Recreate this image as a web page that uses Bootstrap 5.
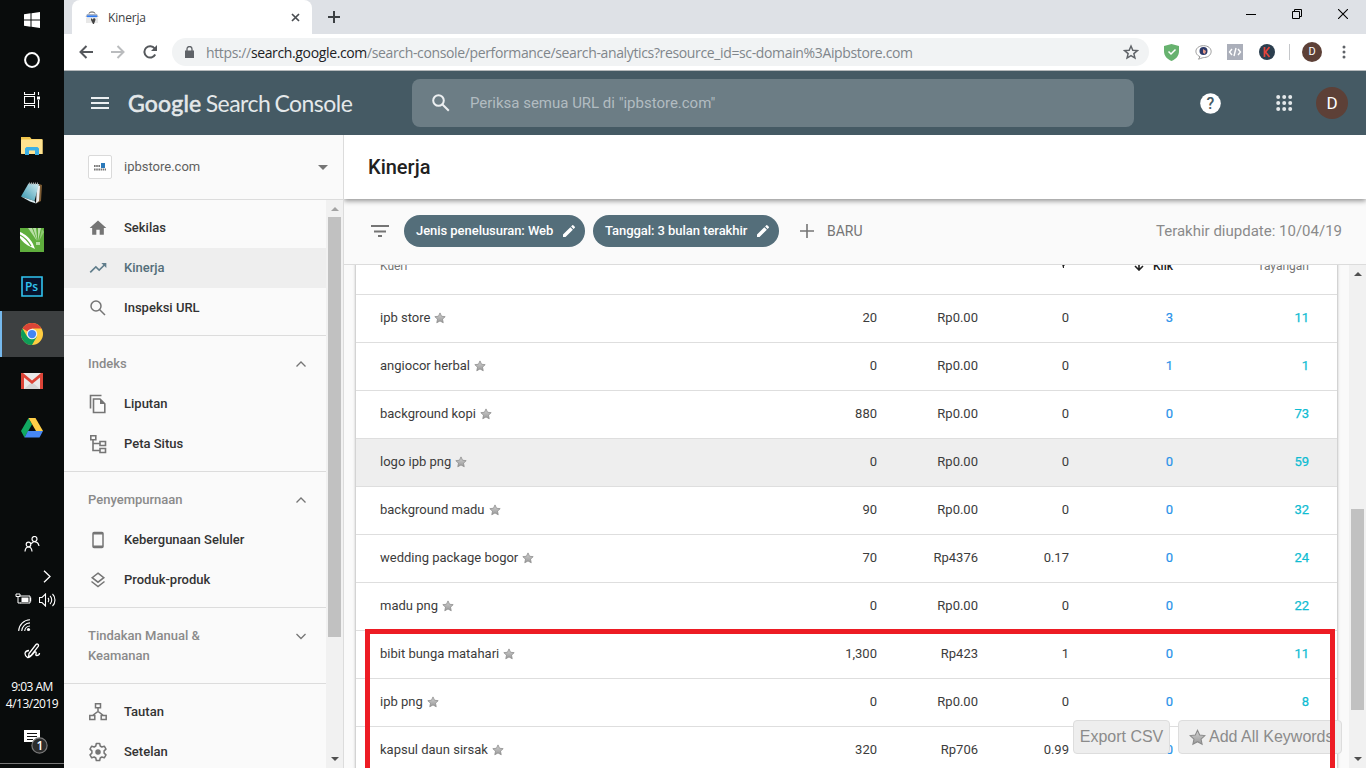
<!DOCTYPE html>
<html lang="id">
<head>
<meta charset="utf-8">
<title>Kinerja</title>
<link rel="stylesheet" href="https://cdn.jsdelivr.net/npm/bootstrap@5.3.0/dist/css/bootstrap.min.css">
<style>
body{width:1366px;height:768px;overflow:hidden;font-family:Roboto,sans-serif;font-size:13px;line-height:20px;color:#3c3c3c;background:#fafafa}
svg{display:block;flex:none}
.taskbar{width:64px;background:#090c0c;color:#fff;font-family:"Open Sans",sans-serif}
.tb{height:47px}.tb.short{height:40px}
.tb.on{background:#3d4041;height:46px;box-shadow:inset 2px 0 #76b9ed}
.clock{font-size:12px;line-height:17px;letter-spacing:-.5px;white-space:nowrap}
.tabstrip{height:34px;flex:none;background:#dee1e6}
.tab-chip{width:240px;height:34px;margin-left:8px;background:#fff;border-radius:8px 8px 0 0;font:12px "Open Sans",sans-serif;letter-spacing:-.2px;color:#3c4043;padding:0 12px 0 13px}
.toolbar{height:37px;flex:none;background:#fff;border-bottom:1px solid #b5b9bb}
.omni{width:977px;height:28px;border-radius:14px;background:#f1f3f4;font:14px "Open Sans",sans-serif;color:#80868b;padding:0 10px 0 13px}
.url{letter-spacing:-.36px;white-space:nowrap}
.url b{font-weight:400;color:#202124}
.gsc{height:64px;flex:none;background:#455a64;color:#e4e8ea}
.wordmark{font:23px/30px Lato,sans-serif;white-space:nowrap;letter-spacing:-.55px;word-spacing:-1px}
.wordmark b{font-weight:400;letter-spacing:.2px;-webkit-text-stroke:.6px #e4e8ea}
.searchbox{width:722px;height:48px;border-radius:8px;background:#6c7d85;color:#b2bcc1;font-size:15px}
.avatar{width:32px;height:32px;border-radius:50%;background:#5d4037;color:#fff;font-size:17px}
.side{width:280px;border-right:1px solid #dcdcdc;background:#fafafa}
.site{height:65px;flex:none;border-bottom:1px solid #dcdcdc;font-size:13px;color:#5f5f5f}
.favbox{width:24px;height:24px;border:1px solid #dadada;border-radius:2px;background:#fff}
.group{padding:8px 0 7px;border-bottom:1px solid #dcdcdc}
.item{height:40px;padding-left:24px;gap:16px;font-weight:500;color:#333}
.item svg,.ic{color:#757575}
.item.on{background:#eee;color:#546e7a}.item.on svg{color:#607d8b}
.ghead{padding:10px 15px 10px 24px;font-weight:500;color:#8a8a8a}
.bar{width:17px;background:#f1f1f1;flex:none}
.bar i{display:block;width:13px;background:#c1c1c1;flex:none}
.title{height:64px;flex:none;background:#fff;font-size:20px;font-weight:500;color:#212121;padding-left:24px;box-shadow:0 2px 5px rgba(0,0,0,.42);position:relative;z-index:1;clip-path:inset(0 0 -10px 0)}
.filters{height:66px;flex:none;border-bottom:1px solid #dcdcdc;padding:0 24px 1px;color:#757575}
.chip{height:32px;border-radius:16px;background:#546e7a;color:#fff;font-weight:500;letter-spacing:-.05px;padding:0 8px 0 12px}
.sheet{width:981px;margin:-18px 11px 0 12px;background:#fff;box-shadow:0 0 3px rgba(0,0,0,.4)}
.r{height:48px;padding:0 28px 2px 24px;border-bottom:1px solid #dedede}
.r.hot{background:#eee}
.r span{text-align:right}
.c1{width:100px}.c2{width:101px}.c3{width:91px}.c4{width:104px}.c5{width:136px}
.c4{color:#2b93ea;-webkit-text-stroke:.2px #2b93ea}.c5{color:#0fbcd2;-webkit-text-stroke:.25px #0fbcd2}
.hd{font-size:12px;color:#757575;height:48px}
.hd .c4{color:#212121;font-weight:500;-webkit-text-stroke:0}.hd .c5{color:#757575;-webkit-text-stroke:0}
.frame{left:365px;top:629px;width:970px;height:160px;border:5px solid #ed1c24;z-index:5}
.floaters{right:24px;bottom:14px;z-index:4;gap:8px}
.fbtn{height:34px;border:1px solid #ddd;border-radius:4px;background:#eee;color:#8b8b8b;font:16px "Liberation Sans",sans-serif;white-space:nowrap}
</style>
</head>
<body>
<svg width="0" height="0" class="position-absolute">
<defs><linearGradient id="sg" x1="0" y1="0" x2="0" y2="1"><stop offset="0" stop-color="#d2d2d2"/><stop offset="1" stop-color="#999"/></linearGradient>
<symbol id="star" viewBox="0 0 24 24"><path d="M12 1.800l3.100 6.700 7.300.8-5.400 5 1.500 7.200L12 17.900l-6.500 3.600 1.500-7.200-5.400-5 7.300-.8z" fill="url(#sg)" stroke="#8a8a8a" stroke-width="1.500"/></symbol>
<symbol id="pen" viewBox="0 0 24 24"><path fill="#fff" d="M3 17.250V21h3.750L17.810 9.940l-3.750-3.750L3 17.250zM20.710 7.040a1 1 0 0 0 0-1.410l-2.340-2.340a1 1 0 0 0-1.410 0l-1.830 1.830 3.750 3.750 1.830-1.830z"/></symbol></defs></svg>
<div class="d-flex h-100">
<aside class="taskbar d-flex flex-column align-items-stretch flex-shrink-0">
 <div class="tb short d-flex align-items-center justify-content-center"><svg width="16" height="16" viewBox="0 0 16 16" fill="#fff"><path d="M0 2.200L6.500 1.300V7.500H0zM7.500 1.200L16 0v7.500H7.500zM0 8.500h6.500v6.200L0 13.800zM7.500 8.500H16V16l-8.500-1.200z"/></svg></div>
 <div class="tb short d-flex align-items-center justify-content-center"><svg width="18" height="18"><circle cx="9" cy="9" r="6.900" fill="none" stroke="#fff" stroke-width="2"/></svg></div>
 <div class="tb d-flex justify-content-center" style="height:43px;padding-top:12px"><svg width="16" height="16" fill="none" stroke="#fff" stroke-width="1.100"><path d="M.5 0v2.500h10V0M.5 16v-2.500h10V16M.5 4.500h10v7H.5zM14.500 0v3M14.500 8v8"/><path d="M13 4.500h3v3h-3z" fill="#fff" stroke="none"/></svg></div>
 <div class="tb d-flex align-items-center justify-content-center" style="padding-bottom:2px"><svg width="22" height="18"><path d="M0 0h9l1.500 2H20.500a1 1 0 0 1 1 1v14H1a1 1 0 0 1-1-1z" fill="#f0c64c"/><path d="M1 2.500h20.500V17H1a1 1 0 0 1-1-1V3z" fill="#ffe391"/><path d="M4 18v-6.500l1.500-1.500h11l1.500 1.500V18h-4v-4.500H8V18z" fill="#3cb0e5"/></svg></div>
 <div class="tb d-flex align-items-center justify-content-center" style="padding-bottom:1px"><svg width="24" height="24"><defs><linearGradient id="np" x1="0" y1="1" x2="1" y2="0"><stop offset="0" stop-color="#2f93ad"/><stop offset="1" stop-color="#d4edf2"/></linearGradient></defs><path d="M19 3l3 1-1 16-4 2z" fill="#7b5a32"/><path d="M17 4l3 1-1 15-3 2.500z" fill="#eee"/><path d="M8.500 2.500L19 3l-4.500 17L1 15.500z" fill="url(#np)"/><path d="M1 15.500L14.500 20l1.500 2.500-6-2z" fill="#dceff4"/><path d="M9 2.500h10" stroke="#aaa" stroke-width="2" stroke-dasharray="1 1"/></svg></div>
 <div class="tb d-flex align-items-center justify-content-center" style="padding-bottom:2px"><svg width="24" height="24"><path fill="#5fae3d" d="M0 0h24v24H0z"/><path d="M8 0l4 0 5 13zM13 0h3l1.500 13zM18 0h3l-3 13z" fill="#b9dfa6"/><path d="M22 1l2 3-5 9z" fill="#8fca73"/><path d="M16 14h4v3h-4z" fill="#b9dfa6"/><path d="M0 4c5 2 10 6 13 12l2 5-4-2C6 17 2 13 0 10z" fill="#fff"/><path d="M0 7c4 2 8 6 11 11" stroke="#5fae3d" stroke-width="1.200" fill="none"/></svg></div>
 <div class="tb d-flex align-items-center justify-content-center" style="padding-bottom:3px"><svg width="22" height="21"><path d="M1 1h20v19H1z" fill="#07122c" stroke="#31c5f0" stroke-width="1.600"/><text x="4" y="15" font-family="Open Sans" font-weight="600" font-size="12" textLength="13" fill="#31c5f0">Ps</text></svg></div>
 <div class="tb on d-flex align-items-center justify-content-center"><svg width="22" height="22" viewBox="0 0 48 48"><circle cx="24" cy="24" r="24" fill="#ffcd40"/><path d="M24 24L3.200 12A24 24 0 0 1 44.800 12H24z" fill="#db4437"/><path d="M3.200 12A24 24 0 0 0 24 48L34.400 30 24 24 13.600 30z" fill="#0f9d58"/><circle cx="24" cy="24" r="11.500" fill="#f1f1f1"/><circle cx="24" cy="24" r="9" fill="#4285f4"/></svg></div>
 <div class="tb d-flex align-items-center justify-content-center"><svg width="22" height="16"><path d="M0 0h22v16H0z" fill="#e9e9e9"/><path d="M3 16l8-7 8 7z" fill="#d5d5d5"/><path d="M0 0h2l9 7.500L20 0h2v16h-3V4.500l-8 6.500-8-6.500V16H0z" fill="#dc4437"/></svg></div>
 <div class="tb d-flex align-items-center justify-content-center"><svg width="22" height="20"><path d="M7.500 0L0 13l3.500 6.500L11 6.500z" fill="#11a861"/><path d="M7.500 0h7L22 13h-7z" fill="#ffcf48"/><path d="M7 13h15l-3.500 6.500h-15z" fill="#4787f3"/></svg></div>
 <div class="mt-auto d-flex flex-column" style="height:235px">
  <div class="d-flex justify-content-center" style="height:34px;padding-top:3px"><svg width="16" height="16" fill="none" stroke="#fff" stroke-width="1.200"><circle cx="10.500" cy="3" r="2.500"/><path d="M7.500 8c.5-3 6.500-3.500 7.500 2"/><circle cx="4.500" cy="8.500" r="2.300"/><path d="M1 15.500c.5-6 6.500-6 7 0"/></svg></div>
  <div class="d-flex justify-content-end" style="height:26px;padding-right:13px;padding-top:3px"><svg width="8" height="13" fill="none" stroke="#fff" stroke-width="1.300"><path d="M1 .8l6 5.700-6 5.700"/></svg></div>
  <div class="d-flex justify-content-between" style="height:26px;padding:0 8px 0 15px"><svg width="17" height="12"><path d="M4.500 3H15v7H5.500" fill="none" stroke="#fff"/><path d="M6.500 4.500h7v4.500h-7zM15 4.500h1.200v4H15z" fill="#fff"/><path d="M1 1v2.500h4V1M2 0v2M4 0v2M3 4v6h3" fill="none" stroke="#fff"/></svg><svg width="17" height="14" fill="none" stroke="#fff" stroke-width="1.100"><path d="M.5 4.500H3l3.500-3.500v12L3 9.500H.5zM9 5c1 1 1 3 0 4M11 3c2.300 2 2.300 6 0 8M13.500 1c3.300 3 3.300 9 0 12"/></svg></div>
  <div style="height:26px;padding-left:18px"><svg width="13" height="13" fill="none" stroke="#fff" stroke-width="1.100"><path d="M.7 12A11.500 11.500 0 0 1 12 .8M3.700 12A8.500 8.500 0 0 1 12 3.900M6.700 12A5.500 5.500 0 0 1 12 7"/><circle cx="10.500" cy="10.500" r="1.600" fill="#fff" stroke="none"/></svg></div>
  <div class="d-flex justify-content-center" style="height:32px;margin-top:-2px"><svg width="17" height="16" fill="none" stroke="#fff" stroke-width="1.300"><path d="M4.500 14l.5-3.500 7-9c1.200-1.200 3.200.2 2.200 1.800L7.500 12zM5 7.500c-5 .5-5 4.500-1.500 7 4 .5 6-6 8-5.500s-1 3.500 1 3.500 3-1.500 3-2.500"/></svg></div>
  <div class="clock text-center pt-1" style="margin-top:-1px">9:03 AM<br>4/13/2019</div>
  <div class="flex-fill" style="padding:18px 0 0 24px"><svg width="26" height="25"><path d="M0 0h16v12h-3v3l-3-3H0z" fill="#fff"/><path d="M3 3.500h10M3 6.500h10M3 9.500h6" stroke="#111"/><circle cx="15.500" cy="15.500" r="7.600" fill="#2b2c2c" stroke="#7a7a7a" stroke-width="1.200"/><text x="12.500" y="20" font-size="12" font-weight="600" font-family="Open Sans" fill="#fff">1</text></svg></div>
  <div style="height:5px;flex:none;border-top:1px solid #777"></div>
 </div>
</aside>
<div class="d-flex flex-column flex-fill" style="min-width:0">
 <div class="tabstrip d-flex">
  <div class="tab-chip d-flex align-items-center"><svg width="14" height="13"><path d="M4 2.500C4 .5 10 .5 10 2.500" fill="none" stroke="#555"/><path d="M2 3h10l1.500 3H.5z" fill="#a9b3c4"/><path d="M2 4.500h10v1.800H2z" fill="#2f7bf5"/><path d="M1 6.500h12V12H1z" fill="#e8e8e8"/><path d="M6 7l1.500 1.500L9 7l1.500 1c0 2-1 3-1.500 5H8L6 9z" fill="#444"/></svg><span style="margin-left:9px">Kinerja</span><svg class="ms-auto" width="9" height="9" stroke="#4a4d51" stroke-width="1.700"><path d="M1 1l7 7M8 1L1 8"/></svg></div>
  <div class="d-flex align-items-center" style="padding-left:16px"><svg width="12" height="12" stroke="#3c4043" stroke-width="2"><path d="M6 0v12M0 6h12"/></svg></div>
  <div class="ms-auto d-flex" style="gap:36px;padding:9px 18px 0 0"><svg width="10" height="10" stroke="#000"><path d="M0 5.500h10"/></svg><svg width="10" height="10" fill="none" stroke="#000"><path d="M.5 2.500h7v7h-7zM2.500 2.500v-2h7v7h-2"/></svg><svg width="10" height="10" stroke="#000" stroke-width="1.100"><path d="M0 0l10 10M10 0L0 10"/></svg></div>
 </div>
 <div class="toolbar d-flex align-items-center">
  <svg style="margin-left:15px" width="14" height="14" fill="none" stroke="#55585c" stroke-width="2"><path d="M14 7H1.500M7.500 1L1.500 7l6 6"/></svg>
  <svg style="margin-left:18px" width="14" height="14" fill="none" stroke="#babcbe" stroke-width="2"><path d="M0 7h12.500M6.500 1l6 6-6 6"/></svg>
  <svg style="margin:0 15px 0 18px" width="14" height="14" fill="none" stroke="#55585c" stroke-width="2"><path d="M12.200 9.500a5.700 5.700 0 1 1-.5-6"/><path d="M14 0v6H8z" fill="#55585c" stroke="none"/></svg>
  <div class="omni d-flex align-items-center"><svg width="9" height="12"><path d="M0 4.500h9V12H0z" fill="#5f6368"/><path d="M2 5V3a2.500 2.500 0 0 1 5 0v2" fill="none" stroke="#5f6368" stroke-width="1.300"/></svg><span class="url" style="margin-left:12px">https://<b>search.google.com</b>/search-console/performance/search-analytics?resource_id=sc-domain%3Aipbstore.com</span>
  <svg class="ms-auto" width="16" height="16" viewBox="0 0 24 24" fill="none" stroke="#5f6368" stroke-width="2.200"><path d="M12 3l2.700 6.300 6.800.6-5.200 4.500 1.600 6.700-5.900-3.600-5.900 3.600 1.600-6.700-5.200-4.500 6.800-.6z"/></svg></div>
  <svg style="margin-left:14px" width="17" height="17"><path d="M8.500 0L16 2v5c0 5-3 8-7.500 10C4 15 1 12 1 7V2z" fill="#67b26f"/><path d="M5.500 7.500L8 10l4.500-4.500" fill="none" stroke="#fff" stroke-width="1.500"/></svg>
  <svg style="margin-left:15px" width="17" height="15"><path d="M8.500.7c10 0 10 11 1 11.800-1 0-3 .5-6 1.700l1.500-2.500C-2 8.500.5.700 8.500.7z" fill="#fff" stroke="#999"/><circle cx="8.500" cy="6" r="4" fill="#2d3968"/><path d="M8 4l3 2-1 3-2-1z" fill="#e59a88"/></svg>
  <svg style="margin-left:15px" width="16" height="16"><path fill="#abafba" d="M0 0h16v16H0z"/><path d="M5 5L2.500 8 5 11M11 5l2.500 3-2.500 3M9 4l-2 8" fill="none" stroke="#fff" stroke-width="1.400"/></svg>
  <svg style="margin-left:16px" width="16" height="16"><circle cx="8" cy="8" r="8" fill="#2b3e4e"/><path d="M5.500 3v10M10.500 3L6.500 8l4 5" fill="none" stroke="#e7453c" stroke-width="1.700"/></svg>
  <span style="width:1px;height:16px;background:#c5c7ca;margin:0 12px 0 14px"></span>
  <span class="avatar d-flex align-items-center justify-content-center" style="width:20px;height:20px;font-size:11px">D</span>
  <svg style="margin-left:20px" width="4" height="14" fill="#5f6368"><circle cx="2" cy="2" r="1.500"/><circle cx="2" cy="7" r="1.500"/><circle cx="2" cy="12" r="1.500"/></svg>
 </div>
 <header class="gsc d-flex align-items-center">
  <svg style="margin:0 19px 0 27px" width="18" height="12" stroke="#eceff1" stroke-width="2"><path d="M0 1h18M0 6h18M0 11h18"/></svg>
  <div class="wordmark" style="width:284px"><b>Google</b> Search Console</div>
  <div class="searchbox d-flex align-items-center"><svg style="margin:0 20px 0 20px" width="18" height="18" fill="none" stroke="#eceff1" stroke-width="2"><circle cx="6.500" cy="6.500" r="5.300"/><path d="M10.500 10.500l6.300 6.300"/></svg><span style="letter-spacing:-.01px">Periksa semua URL di "ipbstore.com"</span></div>
  <svg style="margin-left:66px" width="21" height="21"><circle cx="10.500" cy="10.500" r="10.300" fill="#fff"/><text x="10.500" y="16" font-size="16" font-weight="500" text-anchor="middle" fill="#455a64" font-family="Roboto">?</text></svg>
  <svg style="margin-left:55px" width="17" height="16" fill="#e4e8ea"><g id="dots"><circle cx="2.200" cy="2" r="2"/><circle cx="8.200" cy="2" r="2"/><circle cx="14.200" cy="2" r="2"/></g><use href="#dots" y="6"/><use href="#dots" y="12"/></svg>
  <span class="avatar d-flex align-items-center justify-content-center" style="margin-left:23px">D</span>
 </header>
 <div class="d-flex flex-fill" style="min-height:0">
  <aside class="side d-flex flex-column flex-shrink-0">
   <div class="site d-flex align-items-center" style="padding:0 15px 0 24px"><span class="favbox d-flex align-items-center justify-content-center"><svg width="12" height="8"><path d="M0 3h6M0 6.500h12" stroke="#777" stroke-width="2" stroke-dasharray="1.600 .6"/><path d="M7 0h4v5H7z" fill="#2b79b9"/></svg></span><span style="margin-left:12px">ipbstore.com</span><svg class="ms-auto" width="10" height="5" fill="#757575"><path d="M0 0h10L5 5z"/></svg></div>
   <div class="d-flex flex-fill overflow-hidden">
    <nav class="flex-fill">
     <div class="group">
      <div class="item d-flex align-items-center"><svg width="20" height="20" viewBox="0 0 24 24" fill="currentColor"><path d="M10 20v-6h4v6h5v-8h3L12 3 2 12h3v8z"/></svg>Sekilas</div>
      <div class="item on d-flex align-items-center"><svg width="20" height="20" viewBox="0 0 24 24" fill="currentColor"><path d="M16 6l2.290 2.290-4.880 4.880-4-4L2 16.590 3.410 18l6-6 4 4 6.300-6.290L22 12V6z"/></svg>Kinerja</div>
      <div class="item d-flex align-items-center"><svg width="20" height="20" viewBox="0 0 20 20" fill="none" stroke="currentColor" stroke-width="1.500"><circle cx="8" cy="8" r="5"/><path d="M11.500 11.500l5.500 5.500"/></svg>Inspeksi URL</div>
     </div>
     <div class="group">
      <div class="ghead d-flex justify-content-between align-items-center">Indeks<svg class="ic" width="20" height="20" fill="none" stroke="currentColor" stroke-width="1.300"><path d="M5.500 12.500L10 8l4.500 4.500"/></svg></div>
      <div class="item d-flex align-items-center"><svg width="20" height="20" viewBox="0 0 20 20" fill="none" stroke="currentColor" stroke-width="1.600"><path d="M2.500 14.500V1.500h11M5.500 5h6.500l4.800 4.800V18.500H5.500z"/><path d="M12 5v5h5z" fill="currentColor" stroke="none"/></svg>Liputan</div>
      <div class="item d-flex align-items-center"><svg width="20" height="20" viewBox="0 0 20 20" fill="none" stroke="currentColor" stroke-width="1.600"><path d="M2.800 1.800h5v4h-5zM12 7.500h5.500v4H12zM12 14.500h5.500v4H12zM5 6v10.500h7M5 9.500h7"/></svg>Peta Situs</div>
     </div>
     <div class="group">
      <div class="ghead d-flex justify-content-between align-items-center">Penyempurnaan<svg class="ic" width="20" height="20" fill="none" stroke="currentColor" stroke-width="1.300"><path d="M5.500 12.500L10 8l4.500 4.500"/></svg></div>
      <div class="item d-flex align-items-center"><svg width="20" height="20" viewBox="0 0 20 20" fill="none" stroke="currentColor"><rect x="5" y="2.500" width="10" height="15" rx="1" stroke-width="1.500"/><path d="M5 3.500h10M5 16.500h10" stroke-width="1.800"/></svg>Kebergunaan Seluler</div>
      <div class="item d-flex align-items-center"><svg width="20" height="20" viewBox="0 0 20 20" fill="none" stroke="currentColor" stroke-width="1.500"><path d="M10 3.200l5.800 4.500L10 12.200 4.200 7.700zM3.500 11.500l6.500 5 6.500-5"/></svg>Produk-produk</div>
     </div>
     <div class="group">
      <div class="ghead d-flex justify-content-between"><span>Tindakan Manual &amp;<br>Keamanan</span><svg class="ic" width="20" height="20" fill="none" stroke="currentColor" stroke-width="1.300"><path d="M5.500 8L10 12.500 14.500 8"/></svg></div>
     </div>
     <div class="group">
      <div class="item d-flex align-items-center"><svg width="20" height="20" viewBox="0 0 20 20" fill="none" stroke="currentColor" stroke-width="1.500"><path d="M7.500 1.800h5v4h-5zM1.800 13.500h5v4h-5zM13.200 13.500h5v4h-5zM10 6v4M4.500 13.500L10 9.500l5.500 4"/></svg>Tautan</div>
      <div class="item d-flex align-items-center"><svg width="20" height="20" viewBox="0 0 20 20" fill="none" stroke="currentColor" stroke-width="1.500" stroke-linejoin="round"><path d="M8.300 1.500h3.400l.5 2.500 1.600 1 2.500-.8 1.700 2.900-1.900 1.800v2.200l1.900 1.800-1.700 2.900-2.500-.8-1.600 1-.5 2.500H8.300l-.5-2.500-1.600-1-2.500.8L2 12.900l1.900-1.800V8.900L2 7.100l1.700-2.900 2.500.8 1.600-1z"/><circle cx="10" cy="10" r="2" fill="currentColor"/></svg>Setelan</div>
     </div>
    </nav>
    <div class="bar d-flex flex-column align-items-center"><svg style="margin:7px 0 6px" width="8" height="4" fill="#a3a3a3"><path d="M4 0l4 4H0z"/></svg><i style="height:420px"></i><svg class="mt-auto" style="margin-bottom:7px" width="8" height="4" fill="#505050"><path d="M0 0h8L4 4z"/></svg></div>
   </div>
  </aside>
  <main class="d-flex flex-column flex-fill" style="min-width:0">
   <div class="title d-flex align-items-center">Kinerja</div>
   <div class="filters d-flex align-items-center">
    <svg style="margin:0 15px 0 3px" width="18" height="12" stroke="#757575" stroke-width="2"><path d="M0 1h18M3 6.500h12M7 11h4"/></svg>
    <div class="chip d-flex align-items-center justify-content-between" style="width:181px">Jenis penelusuran: Web<svg width="16" height="16"><use href="#pen"/></svg></div>
    <div class="chip d-flex align-items-center justify-content-between ms-2" style="width:186px">Tanggal: 3 bulan terakhir<svg width="16" height="16"><use href="#pen"/></svg></div>
    <svg style="margin:0 13px 0 21px" width="14" height="14" stroke="#757575" stroke-width="1.600"><path d="M7 0v14M0 7h14"/></svg><span style="font-size:14px">BARU</span>
    <span class="ms-auto" style="font-size:15px;color:#8a8a8a">Terakhir diupdate: 10/04/19</span>
   </div>
   <div class="d-flex flex-fill overflow-hidden">
    <div class="flex-shrink-0"><div class="sheet" id="sheet">
     <div class="r hd d-flex align-items-center" style="padding-bottom:9px"><div class="flex-fill">Kueri</div><span class="c3 d-flex justify-content-end pe-1"><svg width="3" height="4"><path d="M0 0h3v1.500H2V4H1z" fill="#212121"/></svg></span><span class="c4 d-flex justify-content-end align-items-center"><svg style="margin-right:9px" width="10" height="10" fill="none" stroke="#212121" stroke-width="1.600"><path d="M5 0v9M1 5l4 4 4-4"/></svg>Klik</span><span class="c5">Tayangan</span></div>
    </div></div>
    <div class="bar d-flex flex-column align-items-center ms-auto"><svg style="margin-top:7px" width="8" height="4" fill="#505050"><path d="M4 0l4 4H0z"/></svg><i style="height:201px;margin-top:233px"></i><svg class="mt-auto" style="margin-bottom:7px" width="8" height="4" fill="#505050"><path d="M0 0h8L4 4z"/></svg></div>
   </div>
  </main>
 </div>
</div>
</div>
<div class="floaters position-absolute d-flex"><div class="fbtn d-flex align-items-center justify-content-center" style="width:97px">Export CSV</div><div class="fbtn d-flex align-items-center" style="width:164px;padding-left:10px"><svg width="17" height="17" style="margin-right:3px"><use href="#star"/></svg>Add All Keywords</div></div>
<div class="frame position-absolute"></div>
<script src="https://cdn.jsdelivr.net/npm/bootstrap@5.3.0/dist/js/bootstrap.bundle.min.js"></script>
<script>
const rows=[["ipb store","20","Rp0.00","0","3","11"],["angiocor herbal","0","Rp0.00","0","1","1"],["background kopi","880","Rp0.00","0","0","73"],["logo ipb png","0","Rp0.00","0","0","59"],["background madu","90","Rp0.00","0","0","32"],["wedding package bogor","70","Rp4376","0.17","0","24"],["madu png","0","Rp0.00","0","0","22"],["bibit bunga matahari","1,300","Rp423","1","0","11"],["ipb png","0","Rp0.00","0","0","8"],["kapsul daun sirsak","320","Rp706","0.99","0",""]];
document.getElementById("sheet").insertAdjacentHTML("beforeend",rows.map((r,i)=>`<div class="r d-flex align-items-center${i===3?" hot":""}"><div class="flex-fill d-flex align-items-center">${r[0]}<svg width="12" height="12" style="margin-left:4px"><use href="#star"/></svg></div>${r.slice(1).map((v,k)=>`<span class="c${k+1}">${v}</span>`).join("")}</div>`).join(""));
</script>
</body>
</html>
